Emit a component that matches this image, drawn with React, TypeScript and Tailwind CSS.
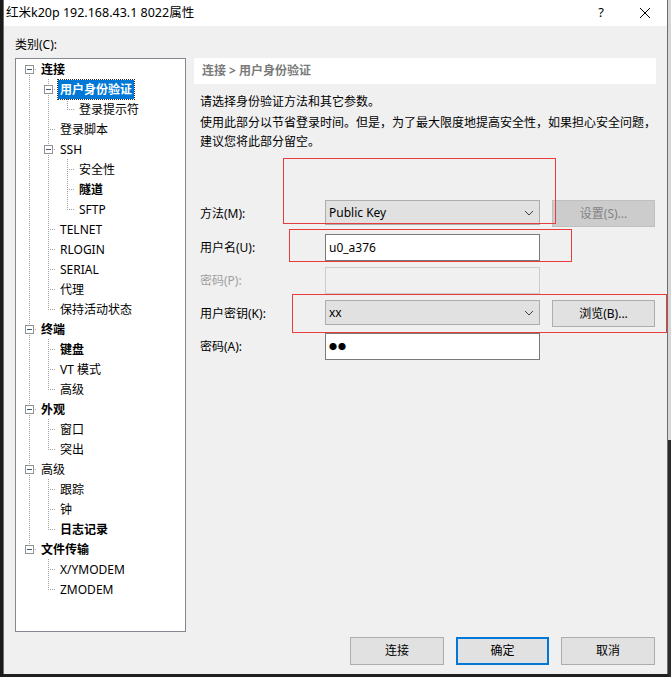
import React from "react";

type Node = { t: string; l: number; b?: boolean; exp?: boolean; sel?: boolean };

const rows: Node[] = [
  { t: "连接", l: 0, b: true, exp: true },
  { t: "用户身份验证", l: 1, b: true, exp: true, sel: true },
  { t: "登录提示符", l: 2 },
  { t: "登录脚本", l: 1 },
  { t: "SSH", l: 1, exp: true },
  { t: "安全性", l: 2 },
  { t: "隧道", l: 2, b: true },
  { t: "SFTP", l: 2 },
  { t: "TELNET", l: 1 },
  { t: "RLOGIN", l: 1 },
  { t: "SERIAL", l: 1 },
  { t: "代理", l: 1 },
  { t: "保持活动状态", l: 1 },
  { t: "终端", l: 0, b: true, exp: true },
  { t: "键盘", l: 1, b: true },
  { t: "VT 模式", l: 1 },
  { t: "高级", l: 1 },
  { t: "外观", l: 0, b: true, exp: true },
  { t: "窗口", l: 1 },
  { t: "突出", l: 1 },
  { t: "高级", l: 0, exp: true },
  { t: "跟踪", l: 1 },
  { t: "钟", l: 1 },
  { t: "日志记录", l: 1, b: true },
  { t: "文件传输", l: 0, b: true, exp: true },
  { t: "X/YMODEM", l: 1 },
  { t: "ZMODEM", l: 1 },
];

const lx = (l: number) => 13 + 19 * l;
const cy = (i: number) => 10 + 20 * i;

function TreeLines() {
  const lines: React.ReactNode[] = [];
  const dot = { stroke: "#a0a0a0", strokeDasharray: "1 1", strokeWidth: 1 };
  const roots = rows.map((r, i) => (r.l === 0 ? i : -1)).filter((i) => i >= 0);
  lines.push(
    <line key="root" x1={lx(0) + 0.5} y1={cy(roots[0])} x2={lx(0) + 0.5} y2={cy(roots[roots.length - 1])} {...dot} />
  );
  rows.forEach((r, i) => {
    // horizontal connector
    lines.push(
      <line key={"h" + i} x1={lx(r.l)} y1={cy(i) + 0.5} x2={21 + 19 * r.l} y2={cy(i) + 0.5} {...dot} />
    );
    // vertical line for children
    let last = -1;
    for (let j = i + 1; j < rows.length && rows[j].l > r.l; j++) {
      if (rows[j].l === r.l + 1) last = j;
    }
    if (last > 0) {
      const x = lx(r.l + 1) + 0.5;
      lines.push(<line key={"v" + i} x1={x} y1={cy(i) + 10} x2={x} y2={cy(last)} {...dot} />);
    }
  });
  rows.forEach((r, i) => {
    if (!r.exp) return;
    const x = lx(r.l);
    const y = cy(i);
    lines.push(
      <g key={"b" + i}>
        <rect x={x - 4 + 0.5} y={y - 4 + 0.5} width={8} height={8} fill="#fff" stroke="#919191" />
        <line x1={x - 2} y1={y + 0.5} x2={x + 3} y2={y + 0.5} stroke="#3c5a84" />
      </g>
    );
  });
  return (
    <svg className="absolute left-0 top-0" width={169} height={572}>
      {lines}
    </svg>
  );
}

function Chevron() {
  return (
    <svg width="10" height="6" viewBox="0 0 10 6" className="mr-[5px]">
      <polyline points="1,1 5,5 9,1" fill="none" stroke="#404040" strokeWidth="1" />
    </svg>
  );
}

function FormRow({ label, disabled, children, top }: { label: string; disabled?: boolean; children: React.ReactNode; top: string }) {
  return (
    <div className={`flex h-[27px] items-center ${top}`}>
      <div className={`w-[131px] pl-[6px] ${disabled ? "text-[#a0a0a0]" : "text-black"}`}>{label}</div>
      {children}
    </div>
  );
}

export default function App() {
  return (
    <div
      className="relative flex h-[677px] w-[671px] overflow-hidden bg-[#1f1f1f] text-[12px] text-black"
      style={{ fontFamily: '"Noto Sans", "Noto Sans CJK SC", sans-serif' }}
    >
      <div className="w-[3px] bg-[#1a1a1a]" />
      <div className="flex h-[674px] w-[665px] flex-col border-x border-[#6e6e6e] bg-[#f0f0f0]">
        {/* title bar */}
        <div className="flex h-[26px] items-center bg-white pl-[2px]">
          <span className="text-[12.5px] leading-[16px]">红米k20p 192.168.43.1 8022属性</span>
          <span className="ml-auto mr-[35px] text-[13px]">?</span>
          <svg width="12" height="12" viewBox="0 0 12 12" className="mr-[16px]">
            <path d="M1 1 L11 11 M11 1 L1 11" stroke="#000" strokeWidth="1" />
          </svg>
        </div>

        <div className="flex flex-1 flex-col pl-[11px]">
          <div className="mt-[10px] h-[17px] leading-[17px]">类别(C):</div>
          <div className="mt-[5px] flex items-start">
            {/* tree */}
            <div className="relative h-[574px] w-[171px] border border-[#828790] bg-white">
              <TreeLines />
              <div className="relative flex flex-col">
                {rows.map((r, i) => (
                  <div key={i} className="flex h-[20px] items-center" style={{ paddingLeft: 23 + 19 * r.l }}>
                    <span
                      className={`h-[19px] px-[2px] leading-[19px] ${r.b ? "font-bold" : ""} ${
                        r.sel ? "bg-[#0078d7] text-white outline-1 outline-dotted outline-[#303030]" : ""
                      }`}
                    >
                      {r.t}
                    </span>
                  </div>
                ))}
              </div>
            </div>

            {/* right panel */}
            <div className="ml-[8px] flex h-[607px] w-[462px] flex-col">
              <div className="flex h-[26px] items-center bg-white pl-[8px] font-bold text-[#7a7a7a]">
                连接 &gt; 用户身份验证
              </div>
              <div className="mt-[8px] pl-[6px] leading-[19px]">请选择身份验证方法和其它参数。</div>
              <div className="mt-[2px] pl-[6px] leading-[19px]">
                使用此部分以节省登录时间。但是，为了最大限度地提高安全性，如果担心安全问题，
                <br />
                建议您将此部分留空。
              </div>

              <FormRow label="方法(M):" top="mt-[49px]">
                <div className="flex h-[25px] w-[215px] items-center justify-between self-start border border-[#adadad] bg-[#e1e1e1] pl-[3px]">
                  <span>Public Key</span>
                  <Chevron />
                </div>
                <div className="ml-[12px] flex h-[27px] w-[103px] items-center justify-center border border-[#bfbfbf] bg-[#cccccc] text-[#838383]">
                  设置(S)...
                </div>
              </FormRow>

              <FormRow label="用户名(U):" top="mt-[7px]">
                <div className="flex h-[27px] w-[215px] items-center border border-[#7a7a7a] bg-white pl-[3px]">u0_a376</div>
              </FormRow>

              <FormRow label="密码(P):" disabled top="mt-[6px]">
                <div className="h-[27px] w-[215px] border border-[#cccccc] bg-[#f0f0f0]" />
              </FormRow>

              <FormRow label="用户密钥(K):" top="mt-[6px]">
                <div className="flex h-[25px] w-[215px] items-center justify-between self-start border border-[#adadad] bg-[#e1e1e1] pl-[3px]">
                  <span>xx</span>
                  <Chevron />
                </div>
                <div className="ml-[12px] flex h-[27px] w-[103px] items-center justify-center border border-[#adadad] bg-[#e1e1e1]">
                  浏览(B)...
                </div>
              </FormRow>

              <FormRow label="密码(A):" top="mt-[6px]">
                <div className="flex h-[27px] w-[215px] items-center border border-[#7a7a7a] bg-white pl-[3px] text-[8px] tracking-[1px]">
                  ●●
                </div>
              </FormRow>

              <div className="mt-auto flex justify-end gap-[12px] pr-[1px]">
                <div className="flex h-[28px] w-[94px] items-center justify-center border border-[#adadad] bg-[#e1e1e1]">连接</div>
                <div className="flex h-[28px] w-[93px] items-center justify-center border-2 border-[#0078d7] bg-[#e1e1e1]">确定</div>
                <div className="flex h-[28px] w-[94px] items-center justify-center border border-[#adadad] bg-[#e1e1e1]">取消</div>
              </div>
            </div>
          </div>
        </div>
      </div>
      <div className="flex w-[3px] flex-col">
        <div className="h-[440px] bg-[#d6d6d6]" />
        <div className="flex-1 bg-[#2b2b2b]" />
      </div>

      {/* red annotation boxes */}
      <div className="pointer-events-none absolute left-[283px] top-[158px] h-[66px] w-[273px] border border-[#e83c3c]" />
      <div className="pointer-events-none absolute left-[289px] top-[229px] h-[33px] w-[283px] border border-[#e83c3c]" />
      <div className="pointer-events-none absolute left-[292px] top-[294px] h-[39px] w-[375px] border border-[#e83c3c]" />
    </div>
  );
}
